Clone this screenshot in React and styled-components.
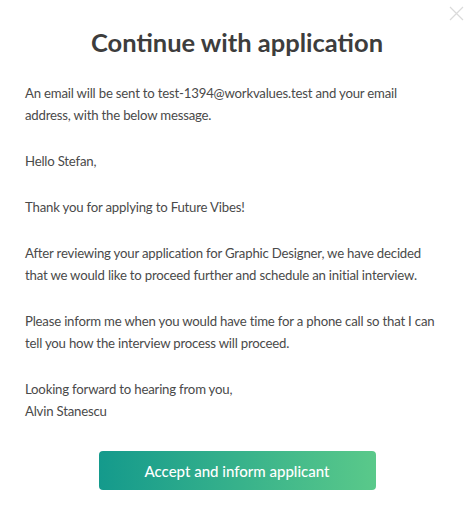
import React from 'react'
import styled, { createGlobalStyle } from 'styled-components'

const GlobalStyle = createGlobalStyle`
  html, body {
    margin: 0;
    padding: 0;
    background: #ffffff;
  }
  body {
    font-family: Lato, "Noto Sans", "Liberation Sans", sans-serif;
  }
`

const Modal = styled.div`
  position: relative;
  width: 474px;
  height: 506px;
  box-sizing: border-box;
  padding: 27px 35px 0 25px;
  background: #fff;
  display: flex;
  flex-direction: column;
`

const CloseButton = styled.button`
  position: absolute;
  top: 4px;
  right: 9px;
  width: 18px;
  height: 18px;
  padding: 0;
  border: none;
  background: none;
  cursor: pointer;
  display: flex;
  align-items: center;
  justify-content: center;
`

const Title = styled.h2`
  margin: 0 -10px 25px 0;
  text-align: center;
  font-size: 25.5px;
  font-weight: 700;
  color: #3d3d3d;
  line-height: 30px;
`

const Message = styled.div`
  font-size: 13.2px;
  letter-spacing: -0.2px;
  line-height: 22px;
  color: #4a4a4a;

  p {
    margin: 0 0 24px 0;
  }
  p:last-child {
    margin-bottom: 0;
  }
`

const Actions = styled.div`
  display: flex;
  justify-content: center;
  margin: 29px -10px 0 0;
`

const PrimaryButton = styled.button`
  width: 277px;
  height: 39px;
  border: none;
  border-radius: 4px;
  background: linear-gradient(90deg, #149a8c 0%, #5ac98a 100%);
  color: #fff;
  font-family: inherit;
  font-size: 15px;
  font-weight: 500;
  cursor: pointer;
`

function CloseIcon() {
  return (
    <svg width="15" height="15" viewBox="0 0 15 15">
      <path d="M1 1 L14 14 M14 1 L1 14" stroke="#dadada" strokeWidth="1.2" fill="none" />
    </svg>
  )
}

export default function App() {
  return (
    <>
      <GlobalStyle />
      <Modal>
        <CloseButton aria-label="Close">
          <CloseIcon />
        </CloseButton>
        <Title>Continue with application</Title>
        <Message>
          <p>
            An email will be sent to test-1394@workvalues.test and your email address, with the below message.
          </p>
          <p>Hello Stefan,</p>
          <p>Thank you for applying to Future Vibes!</p>
          <p>
            After reviewing your application for Graphic Designer, we have decided that we would like to proceed further and schedule an initial interview.
          </p>
          <p>
            Please inform me when you would have time for a phone call so that I can tell you how the interview process will proceed.
          </p>
          <p>
            Looking forward to hearing from you,
            <br />
            Alvin Stanescu
          </p>
        </Message>
        <Actions>
          <PrimaryButton>Accept and inform applicant</PrimaryButton>
        </Actions>
      </Modal>
    </>
  )
}
